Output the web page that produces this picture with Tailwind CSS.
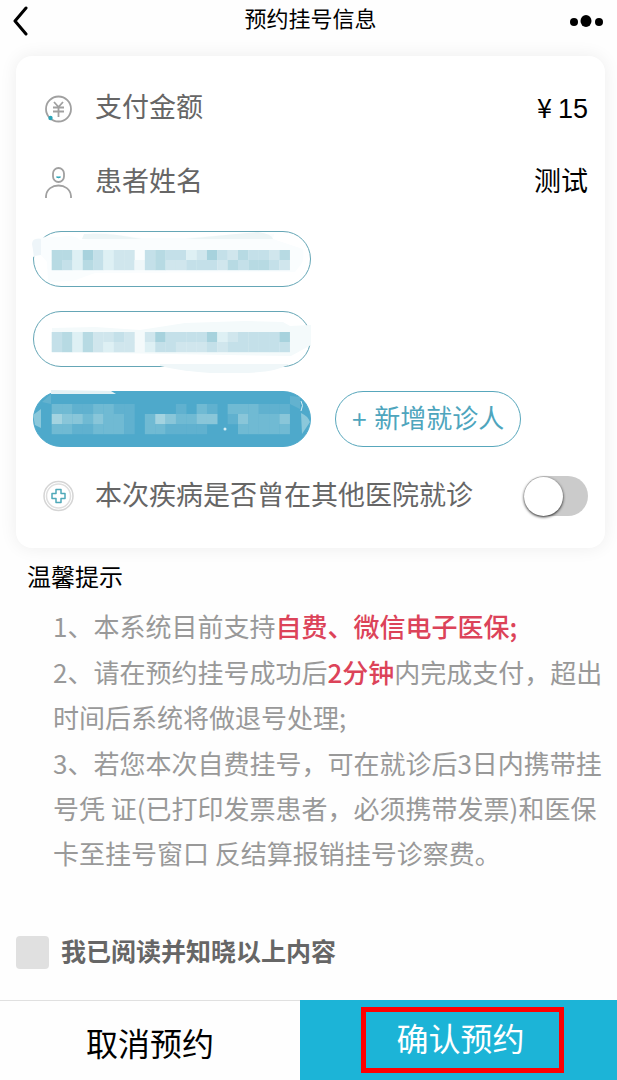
<!DOCTYPE html>
<html lang="zh-CN">
    <head>
        <meta charset="UTF-8">
        <meta name="viewport" content="width=device-width, initial-scale=1">
        <title>预约挂号信息</title>
        <script src="https://cdn.jsdelivr.net/npm/@tailwindcss/browser@4"></script>
    </head>
    <body
        class="flex min-h-screen flex-col bg-[#fefefe] text-black font-['Liberation_Sans','Noto_Sans_CJK_SC',sans-serif]">

        <header class="grid h-10 shrink-0 grid-cols-[1fr_auto_1fr] items-center pr-2 pl-3">
            <button aria-label="返回" class="justify-self-start">
                <svg class="h-8 w-5" viewBox="0 0 20 32" fill="none" stroke="black"
                    stroke-width="3" stroke-linecap="round" stroke-linejoin="round">
                    <path d="M14 4 L3 17 L14 30" />
                </svg>
            </button>
            <h1 class="text-[22px] leading-8">预约挂号信息</h1>
            <button aria-label="更多" class="justify-self-end">
                <svg class="h-8 w-10" viewBox="0 0 40 32">
                    <circle cx="5" cy="18" r="4" />
                    <ellipse cx="17" cy="17" rx="5.500" ry="6" />
                    <circle cx="30" cy="18" r="4" />
                </svg>
            </button>
        </header>

        <main class="flex-1">
            <section
                class="mt-4 mr-3 ml-4 rounded-2xl bg-white px-[17px] py-[15px] text-[27px] shadow-[0_0_18px_rgba(0,0,0,0.07)]">
                <dl>
                    <div class="flex h-[74px] items-center">
                        <svg class="mr-3 h-8 w-[50px] shrink-0" viewBox="0 0 50 32" fill="none"
                            stroke="#a0a0a0" stroke-width="1.8">
                            <circle cx="25.500" cy="17" r="12.5" />
                            <path d="M21 10 L25.500 15 L30 10 M20 15.500 H31 M20 19.500 H31 M25.500 15 V25" />
                            <circle cx="17.500" cy="26" r="2.2" fill="#2ba5b8" stroke="none" />
                        </svg>
                        <dt class="flex-1 text-[#666]">支付金额</dt>
                        <dd class="font-['Noto_Sans_CJK_SC',sans-serif]">¥ <span
                                class="font-['Liberation_Sans',sans-serif]">15</span></dd>
                    </div>
                    <div class="flex h-[74px] items-center">
                        <svg class="mr-3 h-8 w-[50px] shrink-0" viewBox="0 0 50 32" fill="none"
                            stroke="#a0a0a0" stroke-width="1.8">
                            <rect x="20" y="2" width="11" height="14" rx="5.5" />
                            <path d="M13 32 V30 C14 16 37 16 38 30 V32" />
                            <path d="M23.500 11 H27.500 Q25.500 12.500 23.500 11Z" fill="#2ba5b8" stroke="#2ba5b8"
                                stroke-width="1" />
                        </svg>
                        <dt class="flex-1 text-[#666]">患者姓名</dt>
                        <dd>测试</dd>
                    </div>
                </dl>

                <!-- Patients, names masked -->
                <div class="mt-3 grid grid-cols-[278px_auto] justify-start gap-x-6 gap-y-6">
                    <button aria-label="就诊人一"
                        class="relative col-span-2 h-14 w-[278px] rounded-full border border-[#65a6b6]">
                        <svg data-mask="0" class="absolute -top-3 -left-[14px] h-20 w-[300px]"
                            viewBox="0 0 300 80">
                            <path d="M13 20 Q22 16 40 17 Q54 14 60 20 L90 17 L68 13 L85 13 L122 18 H165 L215 14 L254 14 L253 19 L283 29 Q285 42 279 47 L275 52 L75 53 L53 61 L28 62 L27 42 L20 34 L13 37Z"
                                fill="#fafdfe" />
                            <path d="M64 14 Q80 13 97 15 L122 19 H62Z M165 19 L216 14 L238 12 Q252 14 253 19Z"
                                fill="#edf5f6" />
                            <path d="M12 24 Q12 18 21 19 V35 L14 36Z" fill="#eef5f9" />
                        </svg>
                    </button>
                    <button aria-label="就诊人二"
                        class="relative col-span-2 h-14 w-[278px] rounded-full border border-[#65a6b6]">
                        <svg data-mask="1" class="absolute -top-3 -left-[14px] h-20 w-[300px]"
                            viewBox="0 0 300 80">
                            <path d="M32 28 L75 27 L120 30 L165 23 L225 21 L263 22 L270 26 L291 25 V45 L271 56 L33 52Z"
                                fill="#f4fafb" />
                            <path d="M140 64 H269 Q255 73 220 73 H190 Q160 71 140 66Z" fill="#f0f7f9" />
                        </svg>
                    </button>
                    <button aria-label="就诊人三"
                        class="relative h-14 w-[278px] rounded-full border border-[#4ea9cb] bg-[#4ea9cb]">
                        <svg data-mask="2" class="absolute -top-3 -left-[14px] h-20 w-[300px]"
                            viewBox="0 0 300 80">
                            <path d="M31 10 L91 11 L96 14 H31Z" fill="#e3f1f5" />
                            <path d="M13 35 L21 29 V48 L15 45Z M281 33 Q288 36 290 42 L282 54Z" fill="#8bc8db" />
                            <path d="M270 16 L280 17 V29 L270 24Z M22 22 L31 14 V24Z" fill="#63b2cf" />
                            <path d="M281 21 Q284 25 281 31" stroke="#d5edf4" fill="none" />
                            <circle cx="205" cy="49" r="1.500" fill="#d5edf4" />
                        </svg>
                    </button>
                    <button
                        class="h-14 w-[186px] rounded-full border border-[#58a7bc] text-[26px] whitespace-nowrap text-[#4ea5bd]">+
                        新增就诊人</button>
                </div>

                <label class="mt-3 flex h-[74px] items-center text-[#666]">
                    <svg class="mr-3 h-8 w-[50px] shrink-0" viewBox="0 0 50 32" fill="none">
                        <circle cx="25.500" cy="16" r="14.500" stroke="#d5d5d5" stroke-width="1.5" />
                        <circle cx="25.500" cy="16" r="12" stroke="#dedede" stroke-width="1.5" />
                        <path d="M23 9.500 H28 V13.500 H32 V18.500 H28 V22.500 H23 V18.500 H19 V13.500 H23Z"
                            stroke="#4fa9b9" stroke-width="1.5" stroke-linejoin="round" />
                    </svg>
                    <span class="flex-1">本次疾病是否曾在其他医院就诊</span>
                    <input type="checkbox" role="switch"
                        class="flex h-10 w-16 shrink-0 appearance-none items-center rounded-full bg-[#cbcbcb] before:size-[39px] before:rounded-full before:bg-white before:shadow-[0_1px_3px_rgba(0,0,0,0.9)] checked:justify-end checked:bg-[#1cb4d7]">
                </label>
            </section>

            <h2 class="mt-3 pl-[27px] text-2xl leading-9">温馨提示</h2>
            <div
                class="mt-[7px] flex flex-col gap-px pr-2 pl-[53px] font-['Noto_Sans_CJK_SC',sans-serif] text-[26px] leading-[45px] text-[#999]">
                <p>1、本系统目前支持<span class="font-medium text-[#dc4359]">自费、微信电子医保;</span></p>
                <p>2、请在预约挂号成功后<span class="font-medium text-[#dc4359]">2分钟</span>内完成支付，超出时间后系统将做退号处理;</p>
                <p>3、若您本次自费挂号，可在就诊后3日内携带挂号凭 证(已打印发票患者，必须携带发票)和医保卡至挂号窗口 反结算报销挂号诊察费。</p>
            </div>

            <label
                class="mt-[57px] mb-7 flex items-center gap-3 pl-4 text-[25px] leading-10 font-bold text-[#666]">
                <input type="checkbox"
                    class="size-[33px] shrink-0 appearance-none rounded bg-[#e0e0e0] checked:bg-[#1cb4d7]">
                我已阅读并知晓以上内容
            </label>
        </main>

        <footer class="grid h-20 shrink-0 grid-cols-[300fr_317fr] text-[32px] leading-10">
            <button class="border-t border-[#e0e0e0] pt-2">取消预约</button>
            <div class="flex items-center justify-center bg-[#1cb4d7] pl-2">
                <button class="h-[66px] w-[203px] border-5 border-[#ff0000] pr-1 text-white">确认预约</button>
            </div>
        </footer>

        <script>
    const colors = {
      a: '#a7d2dd', b: '#b7dae3', c: '#c4e0e9', d: '#d0e6ed', e: '#def0f4', f: '#eff7f9',
      g: '#60b1cf', h: '#70bad3', i: '#89c6d9', j: '#a3d3e0',
    };

    // One letter per mosaic cell, a dot leaves the cell empty
    const masks = [
      { top: 30, rows: ['bbeacedd.cbccedacdbccdb', 'bcebceddfcbddcccdbcbbcd'] },
      { top: 32, rows: ['cbebddcd.daccccaedcccca', 'cbebdedd.eccdddcdcccccc'] },
      { top: 24, rows: ['hhgghhgg....g.hg.hhhggg', 'jiihihhg.hjihhii.gihhhi', 'hhgghhhg.hhgggg...hhhhh'] },
    ];

    const cell = 10.35;
    document.querySelectorAll('[data-mask]').forEach(svg => {
      const mask = masks[svg.dataset.mask];
      mask.rows.forEach((row, y) => {
        [...row].forEach((key, x) => {
          if (key === '.') return;
          const rect = document.createElementNS('http://www.w3.org/2000/svg', 'rect');
          rect.setAttribute('x', 31.7 + x * cell);
          rect.setAttribute('y', mask.top + y * 10);
          rect.setAttribute('width', cell + 0.2);
          rect.setAttribute('height', 10.2);
          rect.setAttribute('fill', colors[key]);
          svg.appendChild(rect);
        });
      });
    });
  </script>
    </body>
</html>
